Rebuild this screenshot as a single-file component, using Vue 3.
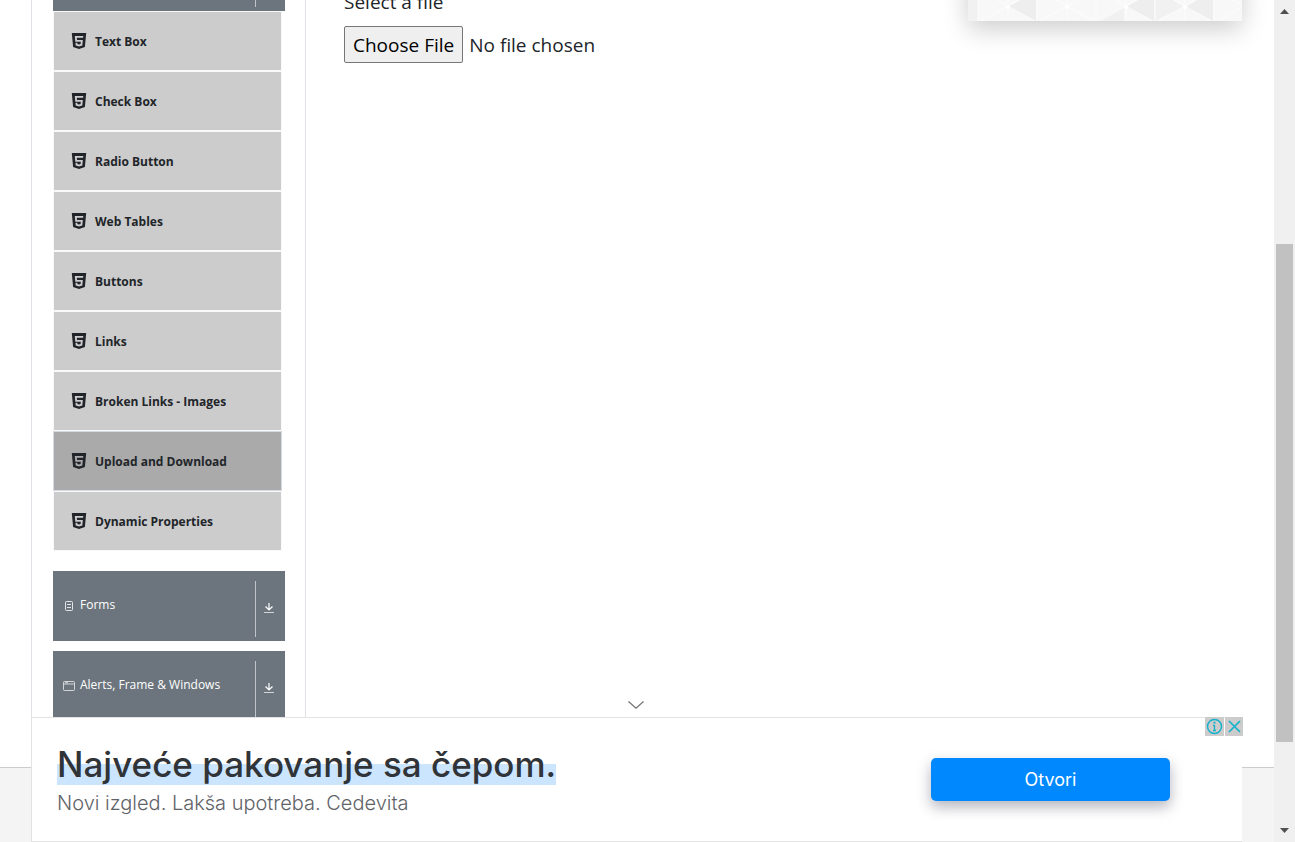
<script setup>
const items = [
  'Text Box',
  'Check Box',
  'Radio Button',
  'Web Tables',
  'Buttons',
  'Links',
  'Broken Links - Images',
  'Upload and Download',
  'Dynamic Properties',
]
const active = 'Upload and Download'
const tiles = [0, 1, 2, 3, 4]
</script>

<template>
  <div class="viewport">
    <div class="page">
      <div class="body">
        <nav class="sidebar">
          <button class="group" type="button" aria-label="Elements">
            <span class="group-label"></span>
            <span class="group-toggle"></span>
          </button>
          <ul class="menu">
            <li v-for="item in items" :key="item">
              <a href="#" class="item" :class="{ active: item === active }">
                <svg class="html5" viewBox="0 0 16 16" aria-hidden="true">
                  <path
                    fill="#212529"
                    fill-rule="evenodd"
                    d="M.8 0h14.400l-1.300 14L8 16l-5.900-2zM3.800 3l.5 5.700h5.500l-.2 2.300-1.600.5-1.600-.5-.1-1.200H4.500l.2 2.600L8 13.400l3.300-1 .5-5.400H6l-.2-2.200h6.300L12.300 3z"
                  />
                </svg>
                <span>{{ item }}</span>
              </a>
            </li>
          </ul>
          <button class="group spaced" type="button">
            <span class="group-label">
              <svg class="group-icon" viewBox="0 0 12 12" fill="none" stroke="#fff" aria-hidden="true">
                <rect x="2.500" y="1.500" width="7" height="9" rx="1" stroke-opacity=".8" />
                <path d="M4 4.500h4M4 7.500h4" stroke-opacity=".8" />
              </svg>
              <span>Forms</span>
            </span>
            <span class="group-toggle">
              <svg class="down" viewBox="0 0 12 12" fill="none" stroke="#fff" aria-hidden="true">
                <path d="M6 1v7M2.500 4.500L6 8l3.500-3.500" stroke-width="1.200" />
                <path d="M1 10.500h10" stroke-opacity=".7" />
              </svg>
            </span>
          </button>
          <button class="group" type="button">
            <span class="group-label">
              <svg class="group-icon" viewBox="0 0 12 12" fill="none" stroke="#fff" aria-hidden="true">
                <rect x=".5" y="1.500" width="11" height="9" rx="1" stroke-opacity=".7" />
                <path d="M1 4h10M2 2.700h3" stroke-opacity=".7" />
              </svg>
              <span>Alerts, Frame &amp; Windows</span>
            </span>
            <span class="group-toggle">
              <svg class="down" viewBox="0 0 12 12" fill="none" stroke="#fff" aria-hidden="true">
                <path d="M6 1v7M2.500 4.500L6 8l3.500-3.500" stroke-width="1.200" />
                <path d="M1 10.500h10" stroke-opacity=".7" />
              </svg>
            </span>
          </button>
        </nav>

        <main class="content">
          <label for="upload">Select a file</label>
          <input id="upload" type="file" />
        </main>

        <aside class="banner">
          <svg width="274" height="80" viewBox="0 0 274 80" aria-hidden="true">
            <rect width="274" height="80" fill="#f8f8f8" />
            <path d="M0 0h10v80H0z" fill="#f1f1f1" />
            <g v-for="t in tiles" :key="t" :transform="`translate(${10 + t * 59} 0)`">
              <path v-if="t !== 1 && t < 4" d="M58 50L30 66l28 14z" fill="#eee" />
              <path v-if="t === 3" d="M0 48l29 18L0 80z" fill="#f1f1f1" />
              <path v-if="t === 2" d="M28 66L2 80h26z" fill="#f1f1f1" />
              <path
                d="M0 48l60 34M0 82l60-34M30 48v34M0 48v34"
                fill="none"
                stroke="#fff"
                stroke-opacity=".7"
              />
              <circle v-if="t < 4" cx="30" cy="66" r="2" fill="#fff" />
            </g>
          </svg>
        </aside>
      </div>
      <footer class="footer"></footer>
    </div>

    <div class="scrollbar" aria-hidden="true">
      <svg width="9" height="5" viewBox="0 0 9 5"><path d="M0 5L4.500 0 9 5z" fill="#505050" /></svg>
      <div class="track"><div class="thumb"></div></div>
      <svg width="9" height="5" viewBox="0 0 9 5"><path d="M0 0l4.500 5L9 0z" fill="#505050" /></svg>
    </div>

    <section class="ad">
      <button class="collapse" type="button" aria-label="Collapse">
        <svg width="16" height="8" viewBox="0 0 16 8" fill="none" stroke="#777" stroke-width="1.300">
          <path d="M.5.5L8 7.200 15.500.5" />
        </svg>
      </button>
      <div class="ad-text">
        <h2><span>Najveće pakovanje sa čepom.</span></h2>
        <p>Novi izgled. Lakša upotreba. Cedevita</p>
      </div>
      <button class="open" type="button">Otvori</button>
      <div class="choices">
        <button type="button" aria-label="Ad information">
          <svg width="19" height="19" viewBox="0 0 19 19" fill="none" stroke="#16b1cb">
            <circle cx="9.500" cy="9.500" r="7" stroke-width="1.500" />
            <path d="M9.500 8v6M8 8.500h1.500M8 13.500h3" stroke-width="1.300" />
            <path d="M8.500 5.700h2" stroke-width="1.800" />
          </svg>
        </button>
        <button type="button" aria-label="Close ad">
          <svg width="18" height="19" viewBox="0 0 18 19" fill="none" stroke="#16b1cb" stroke-width="1.700">
            <path d="M4 4l11 11M15 4L4 15" />
          </svg>
        </button>
      </div>
    </section>
  </div>
</template>

<style>
body {
  margin: 0;
  background: #fff;
}
</style>

<style scoped>
* {
  box-sizing: border-box;
}
button {
  border: 0;
  padding: 0;
  cursor: pointer;
  font-family: inherit;
}
svg {
  display: block;
}
.viewport {
  position: relative;
  display: flex;
  height: 100vh;
  overflow: hidden;
  font-family: "Open Sans", "Noto Sans", sans-serif;
  color: #212529;
}
.page {
  flex: 1;
  display: flex;
  flex-direction: column;
  margin-top: -59px;
}
.body {
  display: flex;
  padding: 0 32px 0 31px;
}
.sidebar {
  flex: 0 0 275px;
  padding: 0 20px 36px 21px;
  border: solid #dee2e6;
  border-width: 0 1px;
}
.group {
  display: flex;
  width: 100%;
  height: 70px;
  margin-bottom: 10px;
  padding: 10px 0 4px 10px;
  background: #6c757d;
  color: #fff;
  font-size: 12px;
  line-height: 16px;
  text-align: left;
}
.group:first-child {
  margin-bottom: 0;
}
.group.spaced {
  margin-top: 20px;
}
.group-label {
  flex: 1;
  display: flex;
  gap: 5px;
  padding-top: 16px;
}
.group-icon {
  width: 12px;
  height: 12px;
  margin-top: 3px;
}
.group-toggle {
  display: flex;
  width: 30px;
  height: 56px;
  padding: 21px 0 0 7px;
  border-left: 1px solid #c0c4c8;
}
.down {
  width: 12px;
  height: 12px;
}
.menu {
  list-style: none;
  margin: 0 3px 0 0;
  padding: 0;
}
.item {
  display: flex;
  align-items: center;
  gap: 8px;
  height: 60px;
  padding: 0 17px;
  border: 1px solid #f8f9fa;
  background: #ccc;
  color: #212529;
  font-size: 12px;
  font-weight: 700;
  text-decoration: none;
}
.item.active {
  background: #aaa;
  border-color: #d5dae1;
}
.html5 {
  width: 16px;
  height: 16px;
}
.content {
  flex: 1;
  padding: 46px 38px 0;
  font-size: 19px;
}
.content label {
  display: block;
  line-height: 30px;
}
.content input {
  display: block;
  width: 100%;
  margin-top: 9px;
  font-family: inherit;
  font-size: 19px;
  color: #212529;
}
.content input::file-selector-button {
  height: 37px;
  margin: 0 6px 0 0;
  padding: 0 8px;
  border: 1px solid #767676;
  border-radius: 2px;
  background: #efefef;
  color: #000;
  font-family: inherit;
  font-size: 19px;
}
.banner {
  align-self: flex-start;
  box-shadow: 0 8px 24px rgba(0, 0, 0, 0.2);
}
.footer {
  flex: 1;
  border-top: 1px solid #ccc;
  background: #f4f4f4;
}
.scrollbar {
  display: flex;
  flex-direction: column;
  align-items: center;
  width: 21px;
  padding: 9px 0;
  background: #f0f0f0;
}
.track {
  flex: 1;
  width: 17px;
  padding-top: 230px;
}
.thumb {
  height: 498px;
  background: #c1c1c1;
}
.ad {
  position: absolute;
  left: 31px;
  right: 53px;
  bottom: 0;
  display: flex;
  align-items: center;
  justify-content: space-between;
  height: 125px;
  padding: 0 72px 0 25px;
  border: 1px solid #e3e3e3;
  border-right: 0;
  background: #fff;
  font-family: Inter, sans-serif;
}
.collapse {
  position: absolute;
  left: 50%;
  bottom: 100%;
  width: 32px;
  height: 18px;
  padding: 2px 8px 8px;
  margin: 0 0 1px -17px;
  background: #fff;
}
.ad-text {
  padding-bottom: 2px;
}
.ad-text h2 {
  margin: 0;
  color: #303438;
  font-size: 35px;
  font-weight: 500;
  line-height: 44px;
}
.ad-text h2 span {
  background: linear-gradient(transparent 50%, #cce5ff 50%);
}
.ad-text p {
  margin: 4px 0 0;
  color: #5f6368;
  font-size: 20px;
  font-weight: 300;
  line-height: 26px;
}
.open {
  width: 239px;
  height: 43px;
  border-radius: 5px;
  background: #0088ff;
  color: #fff;
  font-size: 18px;
  box-shadow: 0 6px 14px rgba(40, 40, 70, 0.35);
}
.choices {
  position: absolute;
  top: -1px;
  right: -1px;
  display: flex;
  gap: 1px;
}
.choices button {
  background: #ccc;
}
</style>
